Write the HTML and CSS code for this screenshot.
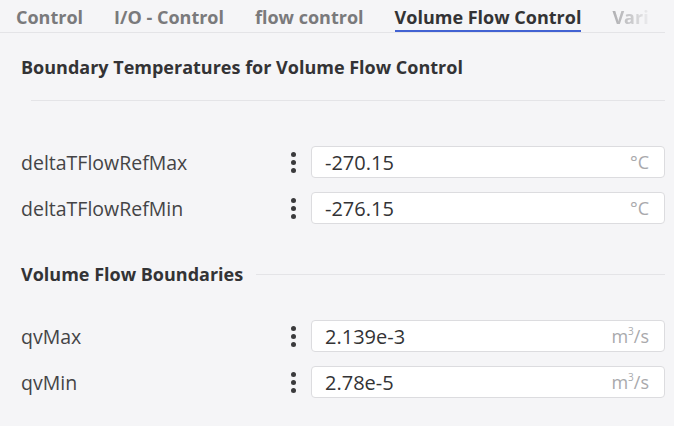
FILE: index.html
```html
<!DOCTYPE html>
<html>
<head>
<meta charset="utf-8">
<link rel="stylesheet" href="styles.css">
</head>
<body>
<div class="page">
  <nav class="tabs">
    <span class="tab">Control</span>
    <span class="tab">I/O - Control</span>
    <span class="tab">flow control</span>
    <span class="tab active">Volume Flow Control</span>
    <span class="tab fade">Vari</span>
  </nav>

  <section class="section first">
    <h2 class="title">Boundary Temperatures for Volume Flow Control</h2>
    <div class="divider"></div>
    <div class="rows">
      <div class="row">
        <span class="label">deltaTFlowRefMax</span>
        <span class="dots"><i></i><i></i><i></i></span>
        <div class="field"><span class="value">-270.15</span><span class="unit">°C</span></div>
      </div>
      <div class="row">
        <span class="label">deltaTFlowRefMin</span>
        <span class="dots"><i></i><i></i><i></i></span>
        <div class="field"><span class="value">-276.15</span><span class="unit">°C</span></div>
      </div>
    </div>
  </section>

  <section class="section second">
    <div class="title-line">
      <h2 class="title">Volume Flow Boundaries</h2>
      <div class="line"></div>
    </div>
    <div class="rows">
      <div class="row">
        <span class="label">qvMax</span>
        <span class="dots"><i></i><i></i><i></i></span>
        <div class="field"><span class="value">2.139e-3</span><span class="unit">m<sup>3</sup>/s</span></div>
      </div>
      <div class="row">
        <span class="label">qvMin</span>
        <span class="dots"><i></i><i></i><i></i></span>
        <div class="field"><span class="value">2.78e-5</span><span class="unit">m<sup>3</sup>/s</span></div>
      </div>
    </div>
  </section>
</div>
</body>
</html>
```

FILE: styles.css
```css
* { box-sizing: border-box; }
html, body {
  margin: 0;
  background: #f5f5f7;
}
body {
  font-family: "Open Sans", "Noto Sans", sans-serif;
  color: #3a3a3c;
  width: 674px;
  height: 426px;
  overflow: hidden;
}
.page {
  padding-right: 9px;
}
.tabs {
  display: flex;
  gap: 31px;
  height: 33px;
  padding-left: 16px;
  border-bottom: 1px solid #e4e4e7;
  white-space: nowrap;
  overflow: hidden;
}
.tab {
  font-weight: 700;
  font-size: 18px;
  color: #7a7a7c;
  line-height: 34px;
  height: 33px;
}
.tab.active {
  color: #333335;
  border-bottom: 3px solid #4262d2;
}
.tab.fade {
  color: #a8a8ab;
  -webkit-mask-image: linear-gradient(to right, rgba(0,0,0,0.9) 0%, rgba(0,0,0,0.5) 60%, rgba(0,0,0,0.1) 100%);
  mask-image: linear-gradient(to right, rgba(0,0,0,0.9) 0%, rgba(0,0,0,0.5) 60%, rgba(0,0,0,0.1) 100%);
}
.section {
  padding-left: 21px;
}
.title {
  margin: 0;
  font-size: 18px;
  font-weight: 700;
  color: #333335;
}
.first .title {
  padding-top: 22px;
  line-height: 24px;
}
.divider {
  margin-top: 21px;
  margin-left: 10px;
  border-top: 1px solid #e4e4e7;
}
.rows {
  display: flex;
  flex-direction: column;
  gap: 14px;
}
.first .rows {
  margin-top: 45px;
}
.row {
  display: flex;
  align-items: center;
  height: 32px;
}
.label {
  width: 268px;
  flex: none;
  font-size: 19.5px;
  color: #444446;
}
.dots {
  width: 22px;
  flex: none;
  display: flex;
  flex-direction: column;
  gap: 3px;
  align-items: flex-start;
  padding-left: 2px;
}
.dots i {
  width: 5px;
  height: 5px;
  border-radius: 50%;
  background: #3a3a3c;
}
.field {
  flex: 1;
  height: 32px;
  display: flex;
  align-items: center;
  justify-content: space-between;
  background: #ffffff;
  border: 1px solid #dcdcdf;
  border-radius: 4px;
  padding: 0 15px 0 13px;
}
.value {
  font-size: 20px;
  color: #333335;
}
.unit {
  font-size: 18px;
  color: #a9a9ac;
}
.unit sup {
  font-size: 10px;
  vertical-align: 8px;
  line-height: 0;
}
.second {
  padding-top: 38px;
}
.title-line {
  display: flex;
  align-items: center;
  gap: 13px;
  height: 24px;
}
.title-line .line {
  flex: 1;
  border-top: 1px solid #e4e4e7;
}
.second .rows {
  margin-top: 34px;
}
```
